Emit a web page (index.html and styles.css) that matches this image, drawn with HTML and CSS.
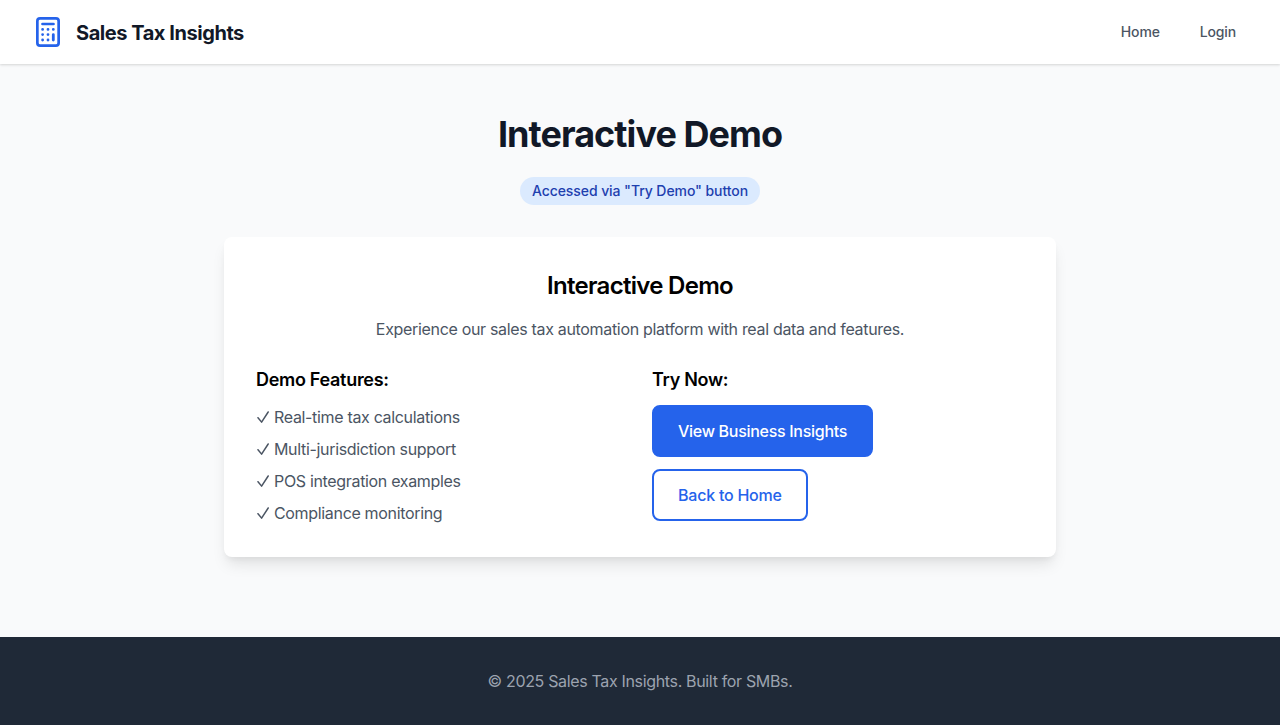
FILE: index.html
```html
<!DOCTYPE html>
<html lang="en">
<head>
<meta charset="utf-8">
<title>Sales Tax Insights</title>
<link rel="stylesheet" href="styles.css">
</head>
<body>
<header class="header">
  <a class="brand">
    <svg class="logo" viewBox="0 0 24 30" fill="none" stroke="#2563eb" stroke-linecap="round" stroke-linejoin="round">
      <rect x="1.35" y="1.35" width="21.3" height="27.3" rx="2.7" stroke-width="2.7"/>
      <path d="M6.5 7h11" stroke-width="2.7"/>
      <path d="M6.6 12.4h.01M12 12.4h.01M17.3 12.4h.01M6.6 17.6h.01M12 17.6h.01M6.6 23h.01M12 23h.01M17.3 17.6v5.4" stroke-width="2.8"/>
    </svg>
    <span class="brand-name">Sales Tax Insights</span>
  </a>
  <nav class="nav"><a>Home</a><a>Login</a></nav>
</header>
<main class="main">
  <h1 class="title">Interactive Demo</h1>
  <span class="badge">Accessed via "Try Demo" button</span>
  <section class="card">
    <h2 class="card-title">Interactive Demo</h2>
    <p class="lead">Experience our sales tax automation platform with real data and features.</p>
    <div class="columns">
      <div>
        <h3 class="subtitle">Demo Features:</h3>
        <ul class="features">
          <li><svg class="check" viewBox="0 0 14 16"><path d="M2 8.7l3.6 4.4L12.2 3"/></svg><span>Real-time tax calculations</span></li>
          <li><svg class="check" viewBox="0 0 14 16"><path d="M2 8.7l3.6 4.4L12.2 3"/></svg><span>Multi-jurisdiction support</span></li>
          <li><svg class="check" viewBox="0 0 14 16"><path d="M2 8.7l3.6 4.4L12.2 3"/></svg><span>POS integration examples</span></li>
          <li><svg class="check" viewBox="0 0 14 16"><path d="M2 8.7l3.6 4.4L12.2 3"/></svg><span>Compliance monitoring</span></li>
        </ul>
      </div>
      <div>
        <h3 class="subtitle">Try Now:</h3>
        <div class="actions">
          <a class="button primary"><span>View Business Insights</span></a>
          <a class="button outline"><span>Back to Home</span></a>
        </div>
      </div>
    </div>
  </section>
</main>
<footer class="footer"><span>© 2025 Sales Tax Insights. Built for SMBs.</span></footer>
</body>
</html>
```
FILE: styles.css
```css
* { box-sizing: border-box; margin: 0; padding: 0; }
body { font-family: Inter, sans-serif; font-size: 16px; line-height: 24px; color: #000; background: #f9fafb; min-height: 725px; display: flex; flex-direction: column; }
.header { height: 64px; padding: 0 44px 0 36px; background: #fff; display: flex; justify-content: space-between; align-items: center; box-shadow: 0 1px 3px rgba(0,0,0,.1), 0 1px 2px rgba(0,0,0,.06); }
.brand { display: flex; align-items: center; gap: 16px; }
.logo { width: 24px; height: 30px; }
.brand-name { padding-top: 2px; font-size: 20px; line-height: 28px; font-weight: 700; color: #111827; letter-spacing: -.45px; }
.nav { display: flex; gap: 40px; font-size: 14px; font-weight: 500; color: #4b5563; letter-spacing: -.15px; }
.main { flex: 1; display: flex; flex-direction: column; align-items: center; padding-top: 48px; }
.title { font-size: 36px; line-height: 40px; font-weight: 700; color: #111827; margin: 2px 0 23px; letter-spacing: -.94px; }
.badge { height: 28px; padding: 0 12px; border-radius: 14px; background: #dbeafe; color: #1e40af; font-size: 14px; line-height: 28px; font-weight: 500; letter-spacing: -.08px; }
.card { width: 832px; height: 320px; margin-top: 32px; padding: 32px; background: #fff; border-radius: 8px; box-shadow: 0 10px 15px -3px rgba(0,0,0,.1), 0 4px 6px -2px rgba(0,0,0,.05); }
.card-title { padding-top: 1px; text-align: center; font-size: 24px; line-height: 32px; font-weight: 600; letter-spacing: -.7px; }
.lead { text-align: center; color: #4b5563; margin: 15px 0 24px; letter-spacing: -.325px; }
.columns { display: grid; grid-template-columns: 1fr 1fr; gap: 24px; }
.subtitle { padding-top: 1px; font-size: 18px; line-height: 28px; font-weight: 600; margin-bottom: 11px; letter-spacing: -.3px; }
.features { list-style: none; color: #4b5563; display: grid; gap: 8px; letter-spacing: -.33px; }
.features li { display: flex; align-items: center; gap: 4px; }
.check { width: 14px; height: 16px; fill: none; stroke: #4b5563; stroke-width: 1.5; stroke-linecap: round; stroke-linejoin: round; }
.actions { display: flex; flex-direction: column; align-items: flex-start; gap: 12px; }
.button { padding: 12px 24px; border: 2px solid #2563eb; border-radius: 8px; font-weight: 500; letter-spacing: -.23px; }
.primary { background: #2563eb; color: #fff; letter-spacing: -.29px; }
.outline { color: #2563eb; }
.footer { height: 88px; background: #1f2937; color: #9ca3af; text-align: center; padding: 32px; letter-spacing: -.34px; }
```
